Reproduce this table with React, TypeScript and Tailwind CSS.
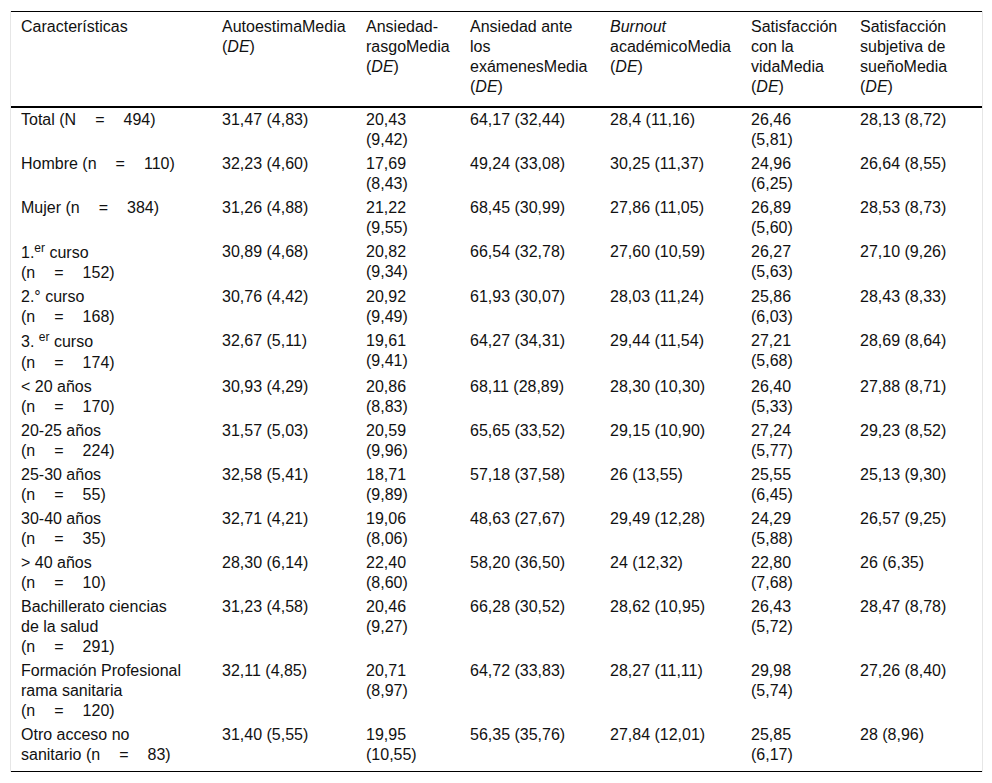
import React from "react";

const Eq = ({ n, v }: { n: string; v: string }) => (
  <span className="whitespace-nowrap">
    ({n}
    <span className="inline-block w-[19px]" />=
    <span className="inline-block w-[19px]" />
    {v})
  </span>
);

const DE = () => (
  <>
    (<i>DE</i>)
  </>
);

const Sup = ({ children }: { children: React.ReactNode }) => (
  <sup className="align-super text-[12px] leading-none top-0">{children}</sup>
);

type Line = React.ReactNode;

const header: Line[][] = [
  ["Características"],
  ["AutoestimaMedia", <DE key="d" />],
  ["Ansiedad-", "rasgoMedia", <DE key="d" />],
  ["Ansiedad ante", "los", "exámenesMedia", <DE key="d" />],
  [<i key="b">Burnout</i>, "académicoMedia", <DE key="d" />],
  ["Satisfacción", "con la", "vidaMedia", <DE key="d" />],
  ["Satisfacción", "subjetiva de", "sueñoMedia", <DE key="d" />],
];

type Row = { label: Line[]; vals: string[] };

const rows: Row[] = [
  {
    label: [
      <>
        Total <Eq n="N" v="494" />
      </>,
    ],
    vals: ["31,47 (4,83)", "20,43 (9,42)", "64,17 (32,44)", "28,4 (11,16)", "26,46 (5,81)", "28,13 (8,72)"],
  },
  {
    label: [
      <>
        Hombre <Eq n="n" v="110" />
      </>,
    ],
    vals: ["32,23 (4,60)", "17,69 (8,43)", "49,24 (33,08)", "30,25 (11,37)", "24,96 (6,25)", "26,64 (8,55)"],
  },
  {
    label: [
      <>
        Mujer <Eq n="n" v="384" />
      </>,
    ],
    vals: ["31,26 (4,88)", "21,22 (9,55)", "68,45 (30,99)", "27,86 (11,05)", "26,89 (5,60)", "28,53 (8,73)"],
  },
  {
    label: [
      <>
        1.<Sup>er</Sup> curso
      </>,
      <Eq n="n" v="152" />,
    ],
    vals: ["30,89 (4,68)", "20,82 (9,34)", "66,54 (32,78)", "27,60 (10,59)", "26,27 (5,63)", "27,10 (9,26)"],
  },
  {
    label: ["2.° curso", <Eq n="n" v="168" />],
    vals: ["30,76 (4,42)", "20,92 (9,49)", "61,93 (30,07)", "28,03 (11,24)", "25,86 (6,03)", "28,43 (8,33)"],
  },
  {
    label: [
      <>
        3. <Sup>er</Sup> curso
      </>,
      <Eq n="n" v="174" />,
    ],
    vals: ["32,67 (5,11)", "19,61 (9,41)", "64,27 (34,31)", "29,44 (11,54)", "27,21 (5,68)", "28,69 (8,64)"],
  },
  {
    label: ["< 20 años", <Eq n="n" v="170" />],
    vals: ["30,93 (4,29)", "20,86 (8,83)", "68,11 (28,89)", "28,30 (10,30)", "26,40 (5,33)", "27,88 (8,71)"],
  },
  {
    label: ["20-25 años", <Eq n="n" v="224" />],
    vals: ["31,57 (5,03)", "20,59 (9,96)", "65,65 (33,52)", "29,15 (10,90)", "27,24 (5,77)", "29,23 (8,52)"],
  },
  {
    label: ["25-30 años", <Eq n="n" v="55" />],
    vals: ["32,58 (5,41)", "18,71 (9,89)", "57,18 (37,58)", "26 (13,55)", "25,55 (6,45)", "25,13 (9,30)"],
  },
  {
    label: ["30-40 años", <Eq n="n" v="35" />],
    vals: ["32,71 (4,21)", "19,06 (8,06)", "48,63 (27,67)", "29,49 (12,28)", "24,29 (5,88)", "26,57 (9,25)"],
  },
  {
    label: ["> 40 años", <Eq n="n" v="10" />],
    vals: ["28,30 (6,14)", "22,40 (8,60)", "58,20 (36,50)", "24 (12,32)", "22,80 (7,68)", "26 (6,35)"],
  },
  {
    label: ["Bachillerato ciencias", "de la salud", <Eq n="n" v="291" />],
    vals: ["31,23 (4,58)", "20,46 (9,27)", "66,28 (30,52)", "28,62 (10,95)", "26,43 (5,72)", "28,47 (8,78)"],
  },
  {
    label: ["Formación Profesional", "rama sanitaria", <Eq n="n" v="120" />],
    vals: ["32,11 (4,85)", "20,71 (8,97)", "64,72 (33,83)", "28,27 (11,11)", "29,98 (5,74)", "27,26 (8,40)"],
  },
  {
    label: [
      "Otro acceso no",
      <>
        sanitario <Eq n="n" v="83" />
      </>,
    ],
    vals: ["31,40 (5,55)", "19,95 (10,55)", "56,35 (35,76)", "27,84 (12,01)", "25,85 (6,17)", "28 (8,96)"],
  },
];

const splitCols = new Set([1, 4]);

function Lines({ lines }: { lines: Line[] }) {
  return (
    <>
      {lines.map((l, i) => (
        <div key={i} className="whitespace-nowrap">
          {l}
        </div>
      ))}
    </>
  );
}

export default function App() {
  return (
    <div
      className="min-h-[783px] bg-white pt-[11px] pl-[10px] text-[16px] leading-[20px] text-[#111]"
      style={{ fontFamily: '"Liberation Sans", Arial, sans-serif' }}
    >
      <div className="w-[973px] border-x border-[#e6e6e6]">
        <table className="w-[971px] table-fixed border-collapse">
          <colgroup>
            <col className="w-[201px]" />
            <col className="w-[144px]" />
            <col className="w-[104px]" />
            <col className="w-[140px]" />
            <col className="w-[141px]" />
            <col className="w-[109px]" />
            <col className="w-[132px]" />
          </colgroup>
          <thead>
            <tr className="border-t border-black border-b-2">
              {header.map((h, i) => (
                <th key={i} className="px-[10px] pt-[5px] pb-[9px] text-left align-top font-normal">
                  <Lines lines={h} />
                </th>
              ))}
            </tr>
          </thead>
          <tbody>
            {rows.map((r, ri) => {
              const last = ri === rows.length - 1;
              const pad = last ? "pt-[2px] pb-[6px]" : "pt-[2px] pb-[2px]";
              return (
                <tr key={ri} className={last ? "border-b border-black" : ""}>
                  <td className={`px-[10px] align-top ${pad}`}>
                    <Lines lines={r.label} />
                  </td>
                  {r.vals.map((v, vi) => {
                    let lines: Line[] = [v];
                    if (splitCols.has(vi)) {
                      const k = v.indexOf(" ");
                      lines = [v.slice(0, k), v.slice(k + 1)];
                    }
                    return (
                      <td key={vi} className={`px-[10px] align-top ${pad}`}>
                        <Lines lines={lines} />
                      </td>
                    );
                  })}
                </tr>
              );
            })}
          </tbody>
        </table>
      </div>
    </div>
  );
}
